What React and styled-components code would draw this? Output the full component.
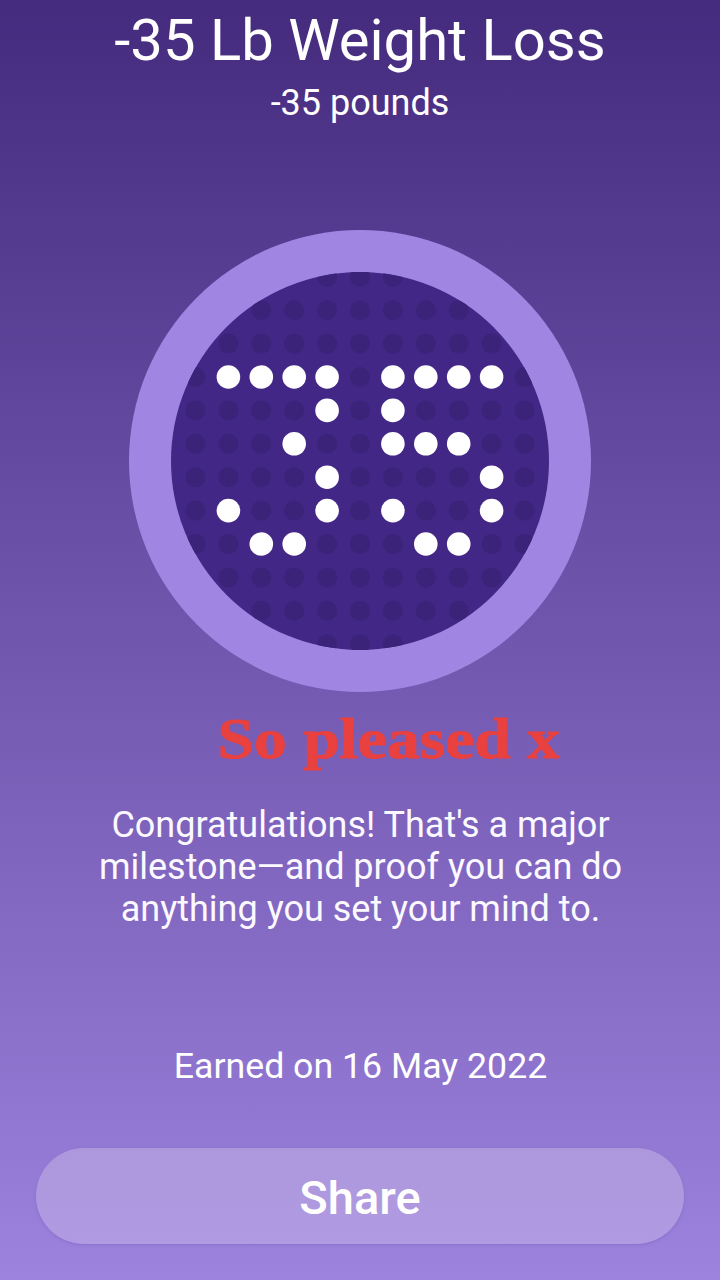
import React from "react";
import styled, { createGlobalStyle } from "styled-components";

const Global = createGlobalStyle`
  html, body { margin: 0; padding: 0; }
  body { font-family: Roboto, "Liberation Sans", sans-serif; }
`;

const Page = styled.div`
  width: 720px;
  height: 1280px;
  overflow: hidden;
  display: flex;
  flex-direction: column;
  align-items: center;
  color: #fff;
  background: linear-gradient(180deg, #452b7e 0%, #9d82de 100%);
`;

const Title = styled.h1`
  margin: 8px 0 0;
  font-size: 58px;
  line-height: 64px;
  font-weight: 400;
`;

const Subtitle = styled.div`
  margin-top: 9px;
  font-size: 36px;
  line-height: 44px;
`;

const BadgeWrap = styled.div`
  margin-top: 105px;
  width: 462px;
  height: 462px;
`;

const Note = styled.div`
  margin-top: 14px;
  padding-left: 50px;
  font-family: "Liberation Serif", serif;
  font-weight: 700;
  font-size: 58px;
  line-height: 66px;
  color: #e8413f;
  transform: scaleX(1.13);
  -webkit-text-stroke: 0.9px #e8413f;
`;

const Message = styled.p`
  margin: 32px 0 0;
  width: 640px;
  padding-left: 1px;
  text-align: center;
  font-size: 36px;
  line-height: 42px;
  color: #fbf9ff;
`;

const Earned = styled.div`
  margin-top: 114px;
  padding-left: 1px;
  font-size: 35.7px;
  line-height: 44px;
`;

const ShareButton = styled.button`
  margin-top: 60px;
  width: 648px;
  height: 96px;
  padding: 2px 0 0;
  border: 0;
  border-radius: 48px;
  background: linear-gradient(180deg, #ad98dc 0%, #b09ae2 100%);
  box-shadow: 0 1px 3px rgba(90, 60, 160, 0.25);
  color: #fff;
  font-family: Roboto, "Liberation Sans", sans-serif;
  font-size: 47px;
  font-weight: 500;
`;

const xs = [-5, -4, -3, -2, -1, 0, 1, 2, 3, 4, 5];
const ys = [-5.5, -4.5, -3.5, -2.5, -1.5, -0.5, 0.5, 1.5, 2.5, 3.5, 4.5, 5.5];

// lit dots, row index then column index
const lit = {
  3: [1, 2, 3, 4, 6, 7, 8, 9],
  4: [4, 6],
  5: [3, 6, 7, 8],
  6: [4, 9],
  7: [1, 4, 6, 9],
  8: [2, 3, 7, 8],
};

function Badge() {
  const dots = [];
  ys.forEach((ry, r) => {
    xs.forEach((rx, c) => {
      const x = 231 + rx * 32.9;
      const y = 230.5 + ry * 33.4;
      const on = lit[r] && lit[r].includes(c);
      if (Math.hypot(x - 231, y - 231) > 192) return;
      dots.push(
        <circle
          key={`${r}-${c}`}
          cx={x}
          cy={y}
          r={on ? 11.8 : 10}
          fill={on ? "#ffffff" : "#3b2379"}
        />
      );
    });
  });
  return (
    <svg width="462" height="462" viewBox="0 0 462 462">
      <defs>
        <clipPath id="face">
          <circle cx="231" cy="231" r="189" />
        </clipPath>
      </defs>
      <circle cx="231" cy="231" r="231" fill="#a086e2" />
      <circle cx="231" cy="231" r="189" fill="#432787" />
      <g clipPath="url(#face)">{dots}</g>
    </svg>
  );
}

export default function App() {
  return (
    <Page>
      <Global />
      <Title>-35 Lb Weight Loss</Title>
      <Subtitle>-35 pounds</Subtitle>
      <BadgeWrap>
        <Badge />
      </BadgeWrap>
      <Note>So pleased x</Note>
      <Message>
        Congratulations! That's a major milestone—and proof you can do anything you set your mind to.
      </Message>
      <Earned>Earned on 16 May 2022</Earned>
      <ShareButton>Share</ShareButton>
    </Page>
  );
}
